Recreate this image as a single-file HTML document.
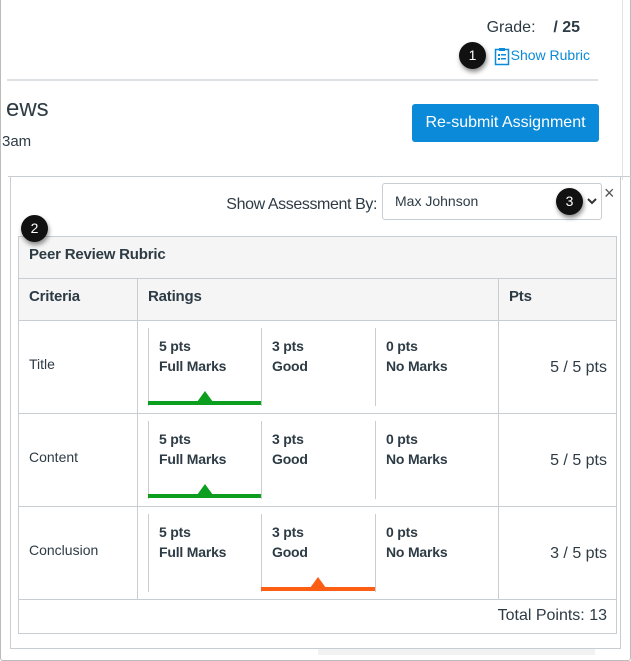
<!DOCTYPE html>
<html><head><meta charset="utf-8"><style>
*{box-sizing:border-box;margin:0;padding:0}
body{width:631px;height:661px;background:#fff;font-family:"Liberation Sans",sans-serif;color:#2d3b45;position:relative;overflow:hidden}
.a{position:absolute}
.r{position:absolute;text-align:right;white-space:nowrap}
.badge{position:absolute;width:27px;height:27px;border-radius:50%;background:#111;color:#fff;font-size:14px;text-align:center;line-height:27px;box-shadow:1px 3px 5px rgba(0,0,0,.45)}
.t{font-size:15px}
.b{font-size:14px;font-weight:bold;color:#2d3b45;letter-spacing:-0.2px}
.vl{position:absolute;width:1px;background:#c7cdd1}
.hl{position:absolute;height:1px;background:#c7cdd1}
</style></head><body>
<div class="a" style="left:0;top:-2px;width:631px;height:663px;border:1px solid #bbb;border-radius:0 0 3px 3px"></div>
<div class="vl" style="left:622px;top:0;height:180px;background:#e2e2e2"></div>
<div class="r" style="right:51px;top:19px;font-size:16px;color:#2d3b45">Grade:&nbsp;&nbsp;&nbsp; <b>/ 25</b></div>
<svg class="a" style="left:494px;top:47px" width="16" height="19" viewBox="0 0 16 19"><rect x="1.5" y="2.5" width="13" height="15" fill="none" stroke="#0a8ad8" stroke-width="1.5"/><rect x="5" y="1" width="6" height="3" fill="#0a8ad8"/><rect x="4" y="7" width="2" height="2" fill="#0a8ad8"/><rect x="7" y="7" width="5" height="1.5" fill="#0a8ad8"/><rect x="4" y="11" width="2" height="2" fill="#0a8ad8"/><rect x="7" y="11" width="5" height="1.5" fill="#0a8ad8"/></svg>
<div class="r" style="right:41px;top:47px;font-size:14px;color:#0a8ad8">Show Rubric</div>
<div class="badge" style="left:459px;top:42px">1</div>
<div class="a" style="left:7px;top:79px;width:591px;height:2px;background:#dde1e3"></div>
<div class="a" style="left:6px;top:95px;font-size:24px;color:#2d3b45">ews</div>
<div class="a" style="left:2px;top:133px;font-size:15px">3am</div>
<div class="a" style="left:412px;top:104px;width:187px;height:38px;background:#0a8ad8;border-radius:3px;color:#fff;font-size:16px;text-align:center;line-height:38px">Re-submit Assignment</div>
<div class="a" style="left:8px;top:176px;width:623px;height:1px;background:#c7cdd1"></div>
<div class="a" style="left:10px;top:177px;width:611px;height:472px;border:1px solid #c7cdd1;border-top:none;background:#fff"></div>
<div class="r" style="right:254px;top:196px;font-size:16px;letter-spacing:-0.4px">Show Assessment By:</div>
<div class="a" style="left:382px;top:183px;width:220px;height:37px;border:1px solid #c7cdd1;border-radius:3px;background:#fff"></div>
<div class="a" style="left:395px;top:193px;font-size:14px">Max Johnson</div>
<svg class="a" style="left:587px;top:197px" width="10" height="8"><path d="M1 2l4 4 4-4" fill="none" stroke="#333" stroke-width="2"/></svg>
<div class="badge" style="left:556px;top:188px">3</div>
<div class="a" style="left:604px;top:183px;font-size:18px;color:#555">×</div>
<div class="a" style="left:18px;top:236px;width:599px;height:398px;border:1px solid #c7cdd1"></div>
<div class="a" style="left:19px;top:237px;width:597px;height:83px;background:#f5f5f5"></div>
<div class="hl" style="left:18px;top:278px;width:599px"></div>
<div class="hl" style="left:18px;top:320px;width:599px"></div>
<div class="hl" style="left:18px;top:413px;width:599px"></div>
<div class="hl" style="left:18px;top:506px;width:599px"></div>
<div class="hl" style="left:18px;top:599px;width:599px"></div>
<div class="vl" style="left:137px;top:278px;height:321px"></div>
<div class="vl" style="left:498px;top:278px;height:321px"></div>
<div class="badge" style="left:21px;top:215px">2</div>
<div class="a b" style="left:29px;top:246px;font-size:15px">Peer Review Rubric</div>
<div class="a b" style="left:29px;top:288px;font-size:15px">Criteria</div>
<div class="a b" style="left:148px;top:288px;font-size:15px">Ratings</div>
<div class="a b" style="left:509px;top:288px;font-size:15px">Pts</div>

<div class="a" style="left:29px;top:356px;font-size:14px">Title</div>
<div class="a" style="left:29px;top:449px;font-size:14px">Content</div>
<div class="a" style="left:29px;top:542px;font-size:14px">Conclusion</div>
<div class="r" style="right:24px;top:359px;font-size:16px">5 / 5 pts</div>
<div class="r" style="right:24px;top:452px;font-size:16px">5 / 5 pts</div>
<div class="r" style="right:24px;top:545px;font-size:16px">3 / 5 pts</div>

<div class="vl" style="left:148px;top:328px;height:78px"></div><div class="vl" style="left:261px;top:328px;height:78px"></div><div class="vl" style="left:375px;top:328px;height:78px"></div>
<div class="vl" style="left:148px;top:421px;height:78px"></div><div class="vl" style="left:261px;top:421px;height:78px"></div><div class="vl" style="left:375px;top:421px;height:78px"></div>
<div class="vl" style="left:148px;top:514px;height:78px"></div><div class="vl" style="left:261px;top:514px;height:78px"></div><div class="vl" style="left:375px;top:514px;height:78px"></div>

<div class="a b" style="left:159px;top:336px;line-height:20px">5 pts<br>Full Marks</div>
<div class="a b" style="left:272px;top:336px;line-height:20px">3 pts<br>Good</div>
<div class="a b" style="left:386px;top:336px;line-height:20px">0 pts<br>No Marks</div>
<div class="a b" style="left:159px;top:429px;line-height:20px">5 pts<br>Full Marks</div>
<div class="a b" style="left:272px;top:429px;line-height:20px">3 pts<br>Good</div>
<div class="a b" style="left:386px;top:429px;line-height:20px">0 pts<br>No Marks</div>
<div class="a b" style="left:159px;top:522px;line-height:20px">5 pts<br>Full Marks</div>
<div class="a b" style="left:272px;top:522px;line-height:20px">3 pts<br>Good</div>
<div class="a b" style="left:386px;top:522px;line-height:20px">0 pts<br>No Marks</div>

<svg class="a" style="left:148px;top:390px" width="114" height="16"><rect x="0" y="11" width="113" height="4" fill="#0b9e1f"/><path d="M49 12L57 1L65 12Z" fill="#0b9e1f"/></svg>
<svg class="a" style="left:148px;top:483px" width="114" height="16"><rect x="0" y="11" width="113" height="4" fill="#0b9e1f"/><path d="M49 12L57 1L65 12Z" fill="#0b9e1f"/></svg>
<svg class="a" style="left:261px;top:576px" width="115" height="16"><rect x="0" y="11" width="114" height="4" fill="#fc5e13"/><path d="M49 12L57 1L65 12Z" fill="#fc5e13"/></svg>

<div class="r" style="right:24px;top:607px;font-size:16px">Total Points: 13</div>
<div class="a" style="left:318px;top:649px;width:277px;height:6px;background:#f2f2f2"></div>
</body></html>
